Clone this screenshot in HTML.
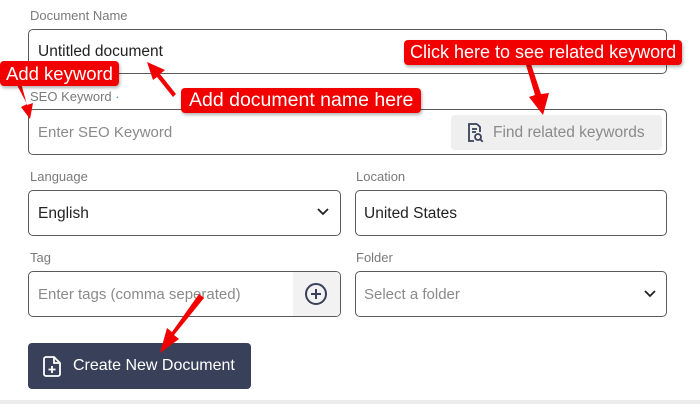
<!DOCTYPE html>
<html><head><style>
*{box-sizing:border-box;margin:0;padding:0}
body{width:700px;height:404px;background:#fff;font-family:"Liberation Sans",sans-serif;position:relative;overflow:hidden}
.a{position:absolute}
.lbl{font-size:13px;color:#7a7a7a}
.box{border:1.5px solid #5a5a5a;border-radius:5px;background:#fff}
.ph{font-size:15px;color:#8a8a8a}
.val{font-size:15.5px;color:#222}
.red{background:#f20000;color:#fff;font-size:18.5px;border-radius:4px;padding:0 6px;line-height:25px;white-space:nowrap;box-shadow:1px 2px 3px rgba(0,0,0,.3)}
</style></head><body>
<div class="a lbl" style="left:30px;top:8px">Document Name</div>
<div class="a box" style="left:28px;top:29px;width:639px;height:45px"></div>
<div class="a val" style="left:38px;top:43px">Untitled document</div>

<div class="a lbl" style="left:30px;top:89px">SEO Keyword <span style="color:#3a8fd0">·</span></div>
<div class="a box" style="left:28px;top:109px;width:639px;height:46px"></div>
<div class="a ph" style="left:38px;top:124px">Enter SEO Keyword</div>
<div class="a" style="left:451px;top:115px;width:211px;height:35px;background:#efefef;border-radius:4px"></div>
<svg class="a" style="left:465px;top:122px" width="20" height="22" viewBox="0 0 20 22" fill="none" stroke="#39415a" stroke-width="1.8"><path d="M12 2H4v17h5"/><path d="M12 2l3 3v5"/><path d="M7 7h5M7 10h4"/><circle cx="13" cy="15" r="3"/><path d="M15.2 17.2l2.5 2.5"/></svg>
<div class="a ph" style="left:493px;top:124px;font-size:15.5px">Find related keywords</div>

<div class="a lbl" style="left:30px;top:169px">Language</div>
<div class="a box" style="left:28px;top:190px;width:313px;height:46px"></div>
<div class="a val" style="left:38px;top:205px">English</div>
<svg class="a" style="left:317px;top:208px" width="12" height="8" viewBox="0 0 12 8"><path d="M1 1l5 5 5-5" fill="none" stroke="#222" stroke-width="1.8"/></svg>
<div class="a lbl" style="left:356px;top:169px">Location</div>
<div class="a box" style="left:355px;top:190px;width:312px;height:46px"></div>
<div class="a val" style="left:364px;top:205px">United States</div>

<div class="a lbl" style="left:30px;top:250px">Tag</div>
<div class="a box" style="left:28px;top:271px;width:313px;height:46px;overflow:hidden"><div style="position:absolute;right:0;top:0;width:47px;height:100%;background:#f2f2f2"></div></div>
<div class="a ph" style="left:38px;top:286px">Enter tags (comma seperated)</div>
<svg class="a" style="left:304px;top:282px" width="24" height="24" viewBox="0 0 24 24" fill="none" stroke="#39415a" stroke-width="2"><circle cx="12" cy="12" r="10"/><path d="M12 7v10M7 12h10"/></svg>
<div class="a lbl" style="left:356px;top:250px">Folder</div>
<div class="a box" style="left:355px;top:271px;width:312px;height:46px"></div>
<div class="a ph" style="left:364px;top:286px">Select a folder</div>
<svg class="a" style="left:644px;top:290px" width="12" height="8" viewBox="0 0 12 8"><path d="M1 1l5 5 5-5" fill="none" stroke="#222" stroke-width="1.8"/></svg>

<div class="a" style="left:28px;top:343px;width:223px;height:46px;background:#39415a;border-radius:4px"></div>
<svg class="a" style="left:43px;top:356px" width="18" height="21" viewBox="0 0 18 21" fill="none" stroke="#fff" stroke-width="1.8"><path d="M11 1H3a2 2 0 0 0-2 2v15a2 2 0 0 0 2 2h12a2 2 0 0 0 2-2V7z"/><path d="M11 1v6h6"/><path d="M9 10v7M5.5 13.5h7"/></svg>
<div class="a" style="left:73px;top:357px;font-size:16px;color:#fff">Create New Document</div>
<div class="a" style="left:0;top:400px;width:700px;height:4px;background:#ececec"></div>

<svg class="a" style="left:0;top:0" width="700" height="404">
<g fill="#f20000">
<path d="M176 94L160 74L165 70L147 62L153 80L157 77L173 97Z"/>
<path d="M17 85L27 104L21 107L30 119L33 103L27 105L21 83Z"/>
<path d="M526 65L535 95L529 97L543 115L549 93L541 94L531 64Z"/>
<path d="M199 294L172 332L167 328L160 353L179 339L174 335L204 298Z"/>
</g>
</svg>
<div class="a red" style="left:0;top:61px">Add keyword</div>
<div class="a red" style="left:181px;top:88px;padding:0 8px;font-size:19.5px">Add document name here</div>
<div class="a red" style="left:404px;top:40px;font-size:18px">Click here to see related keyword</div>
</body></html>
